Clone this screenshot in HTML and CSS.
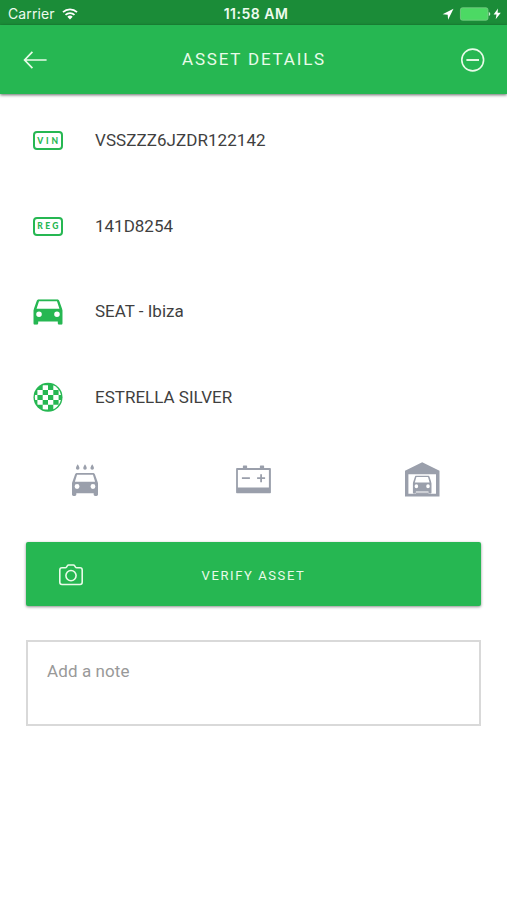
FILE: index.html
```html
<!DOCTYPE html>
<html lang="en">
<head>
<meta charset="utf-8">
<title>Asset Details</title>
<link rel="stylesheet" href="styles.css">
</head>
<body>
<svg class="defs" aria-hidden="true">
  <symbol id="car" viewBox="3 5 18 16" preserveAspectRatio="none">
    <path fill-rule="evenodd" d="M18.92 6.01C18.72 5.42 18.16 5 17.5 5h-11c-.66 0-1.21.42-1.42 1.01L3 12v8c0 .55.45 1 1 1h1c.55 0 1-.45 1-1v-1h12v1c0 .55.45 1 1 1h1c.55 0 1-.45 1-1v-8l-2.08-5.99zM6.5 16.1a1.7 1.7 0 1 1 0-3.4 1.7 1.7 0 0 1 0 3.4zm11 0a1.7 1.7 0 1 1 0-3.4 1.7 1.7 0 0 1 0 3.4zM5 11l1.5-4.8h11L19 11H5z"/>
  </symbol>
</svg>
<div class="status">
  <div class="carrier"><span>Carrier</span>
    <svg width="16" height="12" viewBox="0 0 16 12"><g fill="none" stroke="#fff" stroke-width="1.8"><path d="M1 4.2a10.2 10.2 0 0 1 14 0"/><path d="M3.5 6.8a6.6 6.6 0 0 1 9 0"/></g><path fill="#fff" d="M5.3 8.7a4 4 0 0 1 5.4 0L8 11.4z"/></svg>
  </div>
  <div class="time">11:58 AM</div>
  <div class="power">
    <svg width="60" height="14" viewBox="0 0 60 14"><path fill="#fff" d="M12.500 1.800 1.600 7.200l5.100.5.400 5z"/><rect x="19.400" y=".8" width="27.600" height="12.400" rx="2" fill="#4cd964" stroke="#7bcc88" stroke-width=".8"/><path fill="#c9efcf" d="M47.800 5v4q1.500-.5 1.500-2t-1.500-2z"/><path fill="#fff" d="M57 1.600l-4.400 6h2.900l-.8 4.700 5.100-6.500h-3.200z"/></svg>
  </div>
</div>
<header class="bar">
  <svg width="24" height="20" viewBox="0 0 24 20"><path fill="none" stroke="#e9fbe9" stroke-width="1.7" d="M23.600 10H1.600M9.400 1.900 1.600 10l7.800 8.100"/></svg>
  <h1>ASSET DETAILS</h1>
  <svg width="24" height="24" viewBox="0 0 24 24"><g fill="none" stroke="#e9fbe9" stroke-width="1.6"><circle cx="11.700" cy="12" r="10.900"/><path stroke-width="1.9" d="M5.400 12H18"/></g></svg>
</header>
<main>
  <ul class="details">
    <li><span class="icon"><span class="tag vin">VIN</span></span><span class="value vin-value">VSSZZZ6JZDR122142</span></li>
    <li><span class="icon"><span class="tag">REG</span></span><span class="value">141D8254</span></li>
    <li><span class="icon"><svg class="green" width="30" height="26"><use href="#car" x=".3" y=".3" width="29.400" height="25.500"/></svg></span><span class="value">SEAT - Ibiza</span></li>
    <li><span class="icon"><svg width="30" height="30" viewBox="0 0 30 30">
      <clipPath id="disc"><circle cx="15" cy="15.200" r="13.100"/></clipPath>
      <circle cx="15" cy="15.200" r="14.500" fill="#26b752"/>
      <path clip-path="url(#disc)" fill="#fff" d="M9.700 3.300H15V8H9.700zM20.300 3.300h5.300V8h-5.300zM4.400 8h5.300v5H4.400zM15 8h5.300v5H15zM25.600 8H29v5h-3.400zM9.700 13H15v5H9.700zM20.300 13h5.300v5h-5.300zM1 13h3.400v5H1zM4.400 18h5.300v4.800H4.400zM15 18h5.300v4.800H15zM25.600 18H29v4.800h-3.400zM9.700 22.800H15v4.700H9.700zM20.300 22.800h5.300v4.700h-5.300z"/></svg></span><span class="value">ESTRELLA SILVER</span></li>
  </ul>
  <div class="options">
    <svg width="36" height="36" viewBox="0 0 36 36"><path d="M10.700 2.200Q8.900 4.700 8.900 6a1.800 1.800 0 0 0 3.600 0q0-1.300-1.800-3.800zM18 2.200Q16.200 4.700 16.200 6a1.800 1.800 0 0 0 3.600 0q0-1.300-1.800-3.800zM25.200 2.200Q23.400 4.700 23.400 6a1.800 1.800 0 0 0 3.600 0q0-1.300-1.800-3.800z"/><use href="#car" x="5" y="11" width="26" height="23"/></svg>
    <svg width="36" height="36" viewBox="0.600 -.3 36 36"><path fill-rule="evenodd" d="M1.500 5.800h6V3.700q0-.6.600-.6h3q.6 0 .6.600v2.100h12.800V3.700q0-.6.600-.6h3q.6 0 .6.600v2.100h6q.8 0 .8.800v23.500q0 .8-.8.800H1.500q-.8 0-.8-.8V6.600q0-.8.800-.8zm1 1.800v17.600h31V7.600z"/><path d="M6.500 15h8v1.800h-8zM21.700 15h8v1.800h-8zM24.800 11.900h1.800v8h-1.800z"/></svg>
    <svg width="36" height="36" viewBox="0.800 0 36 36"><path fill-rule="evenodd" d="M18 .3 35.300 8.800v25.700H.7V8.800zM4.200 12.300v19.400h27.600V12.300z"/><use href="#car" x="8.500" y="13.600" width="19" height="18.100"/><path d="M11.500 30.500h13v1.400h-13z"/></svg>
  </div>
  <button class="verify">
    <svg width="26" height="24" viewBox="0 0 26 24"><g fill="none" stroke="#e9fbe9" stroke-width="1.600" stroke-linejoin="round"><path d="M4 4.800h3.300q.8 0 1.200-.7l.8-1.300q.5-.8 1.300-.8h4.800q.8 0 1.300.8l.8 1.300q.4.700 1.200.7H22q2.200 0 2.200 2.200v12.300q0 2.200-2.200 2.200H4q-2.200 0-2.200-2.200V7Q1.800 4.800 4 4.800z"/><circle cx="13" cy="12.600" r="5.100"/></g></svg>
    <span>VERIFY ASSET</span>
  </button>
  <textarea class="note" placeholder="Add a note"></textarea>
</main>
</body>
</html>
```

FILE: styles.css
```css
* { box-sizing: border-box; }
body {
  margin: 0;
  height: 900px;
  background: #fff;
  font-family: Roboto, sans-serif;
  color: #3f3f3f;
  overflow: hidden;
}
svg { display: block; flex: none; }
.defs { width: 0; height: 0; float: left; }
.status {
  display: grid;
  grid-template-columns: 1fr auto 1fr;
  align-items: center;
  height: 25px;
  padding: 2px 6px 0 8px;
  background: #1b8c38;
  color: #eefbee;
  font: 14px/20px Inter, sans-serif;
}
.carrier { display: flex; align-items: center; gap: 7px; letter-spacing: .1px; }
.time { font-weight: 600; font-size: 14px; letter-spacing: .5px; padding-left: 3px; }
.power { justify-self: end; }
.bar {
  display: flex;
  align-items: center;
  justify-content: space-between;
  height: 69px;
  padding: 1px 22px 0 23px;
  background: #26b752;
  box-shadow: 0 1px 3px rgba(0, 0, 0, .6);
}
.bar h1 {
  margin: 0 0 3px;
  color: #e9fbe9;
  font-size: 17px;
  font-weight: 400;
  letter-spacing: 1.8px;
}
.details { list-style: none; margin: 0; padding: 4px 0 0; }
.details li {
  display: flex;
  align-items: center;
  height: 85.5px;
  padding-left: 33px;
  font-size: 17px;
}
.icon { width: 62px; }
.value { padding-bottom: 1.5px; }
.vin-value { letter-spacing: .06px; }
.green { fill: #26b752; }
.tag {
  display: flex;
  align-items: center;
  justify-content: center;
  width: 30px;
  height: 19px;
  border: 2px solid #26b752;
  border-radius: 4px;
  color: #26b752;
  font: 900 8.5px/1 Lato, sans-serif;
  letter-spacing: 2.3px;
  padding-left: 2px;
}
.vin { letter-spacing: 2.8px; }
.options {
  display: grid;
  grid-template-columns: repeat(3, 1fr);
  justify-items: center;
  padding-top: 22px;
  fill: #9a9fab;
}
.verify {
  display: grid;
  grid-template-columns: 112px 1fr 112px;
  align-items: center;
  width: 455px;
  height: 64px;
  margin: 44px 26px 0;
  padding: 2px 0 0;
  border: 0;
  border-radius: 2px;
  background: #26b752;
  box-shadow: 0 1px 3px rgba(0, 0, 0, .45);
  color: #e9fbe9;
  font: 13px Roboto, sans-serif;
  letter-spacing: 1.6px;
}
.verify svg { margin-left: 32px; }
.note {
  display: block;
  width: 455px;
  height: 86px;
  margin: 34px 26px 0;
  padding: 18px 19px;
  border: 2px solid #d9d9d9;
  border-radius: 0;
  resize: none;
  font: 17px/22px Roboto, sans-serif;
  letter-spacing: .1px;
}
.note::placeholder { color: #999; opacity: 1; }
```
